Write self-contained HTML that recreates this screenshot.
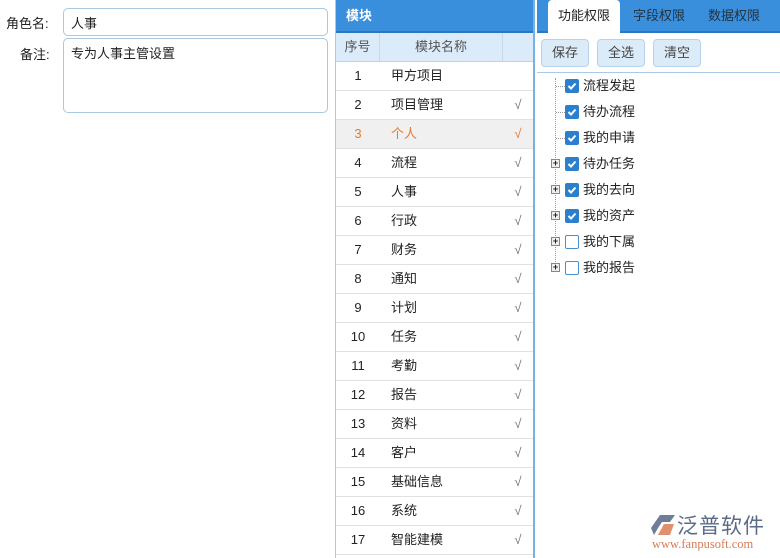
<!DOCTYPE html>
<html><head><meta charset="utf-8"><style>
*{margin:0;padding:0;box-sizing:border-box}
body{width:780px;height:558px;overflow:hidden;background:#fff;font-family:"Liberation Sans","Noto Sans CJK SC",sans-serif;font-size:13px;color:#222;position:relative}
.abs{position:absolute}
.lbl{position:absolute;font-size:13px;color:#222}
.inp{position:absolute;border:1px solid #a9c8e2;border-radius:5px;padding:4px 7px;font-size:13px}
.mid{position:absolute;left:335px;top:0;width:200px;height:558px;border-left:1px solid #a8c9e8;border-right:2px solid #7ab0e0}
.hdr{height:33px;background:#3a8fdc;color:#fff;font-weight:bold;font-size:13px;line-height:31px;padding-left:10px;border-bottom:2px solid #2a78c4}
.ch{height:29px;background:#dcebfa;border-bottom:1px solid #b9d3ec;display:flex;color:#555;line-height:28px}
.row{height:29px;border-bottom:1px solid #e1e1e1;display:flex;line-height:28px}
.c1{width:44px;text-align:center}
.c2{width:123px;padding-left:11px}
.c3{flex:1;text-align:center;color:#777}
.ch .c1,.ch .c2{border-right:1px solid #c4d9ee}
.ch .c2{text-align:center;padding-left:0}
.sel{background:#f0f0f0;color:#e87a2c}
.sel .c3{color:#e87a2c}
.tabs{position:absolute;left:537px;top:0;width:243px;height:33px;background:#3a8fdc;border-bottom:2px solid #2a78c4}
.tab{position:absolute;top:0;height:33px;line-height:31px;color:#234;font-size:13px}
.tab.act{background:#fff;border-radius:4px 4px 0 0;padding:0 10px;color:#222;height:34px}
.btn{position:absolute;top:39px;height:28px;width:48px;background:#dcebf8;border:1px solid #b6d2ec;border-radius:4px;text-align:center;line-height:26px;color:#444}
.tb{position:absolute;left:537px;top:72px;width:243px;border-top:1px solid #a8c9e8}
.it{position:absolute;left:565px;height:16px;line-height:16px}
.cb{position:absolute;left:0;top:0;width:14px;height:14px;border-radius:2px;background:#2a7fcf}
.cb.off{background:#fff;border:1px solid #4a90d0}
.cb svg{position:absolute;left:2px;top:2px}
.it span{position:absolute;left:18px;top:-1px;white-space:nowrap}
.pl{position:absolute;left:551px;width:9px;height:9px;border:1px solid #888;background:#eee;font-size:9px;line-height:7px;text-align:center;font-weight:bold}
</style></head><body>
<div class="lbl" style="left:6px;top:13px">角色名:</div>
<div class="inp" style="left:63px;top:8px;width:265px;height:28px">人事</div>
<div class="lbl" style="left:20px;top:44px">备注:</div>
<div class="inp" style="left:63px;top:38px;width:265px;height:75px">专为人事主管设置</div>

<div class="mid">
<div class="hdr">模块</div>
<div class="ch"><div class="c1">序号</div><div class="c2">模块名称</div><div class="c3"></div></div>
<div class="row"><div class="c1">1</div><div class="c2">甲方项目</div><div class="c3"></div></div>
<div class="row"><div class="c1">2</div><div class="c2">项目管理</div><div class="c3">√</div></div>
<div class="row sel"><div class="c1">3</div><div class="c2">个人</div><div class="c3">√</div></div>
<div class="row"><div class="c1">4</div><div class="c2">流程</div><div class="c3">√</div></div>
<div class="row"><div class="c1">5</div><div class="c2">人事</div><div class="c3">√</div></div>
<div class="row"><div class="c1">6</div><div class="c2">行政</div><div class="c3">√</div></div>
<div class="row"><div class="c1">7</div><div class="c2">财务</div><div class="c3">√</div></div>
<div class="row"><div class="c1">8</div><div class="c2">通知</div><div class="c3">√</div></div>
<div class="row"><div class="c1">9</div><div class="c2">计划</div><div class="c3">√</div></div>
<div class="row"><div class="c1">10</div><div class="c2">任务</div><div class="c3">√</div></div>
<div class="row"><div class="c1">11</div><div class="c2">考勤</div><div class="c3">√</div></div>
<div class="row"><div class="c1">12</div><div class="c2">报告</div><div class="c3">√</div></div>
<div class="row"><div class="c1">13</div><div class="c2">资料</div><div class="c3">√</div></div>
<div class="row"><div class="c1">14</div><div class="c2">客户</div><div class="c3">√</div></div>
<div class="row"><div class="c1">15</div><div class="c2">基础信息</div><div class="c3">√</div></div>
<div class="row"><div class="c1">16</div><div class="c2">系统</div><div class="c3">√</div></div>
<div class="row"><div class="c1">17</div><div class="c2">智能建模</div><div class="c3">√</div></div>
</div>

<div class="tabs">
<div class="tab act" style="left:11px">功能权限</div>
<div class="tab" style="left:96px">字段权限</div>
<div class="tab" style="left:171px">数据权限</div>
</div>
<div class="btn" style="left:541px">保存</div>
<div class="btn" style="left:597px">全选</div>
<div class="btn" style="left:653px">清空</div>
<div class="tb"></div>
<div class="abs" style="left:555px;top:78px;height:192px;border-left:1px dotted #999"></div>

<div class="abs" style="left:556px;top:86px;width:9px;border-top:1px dotted #999"></div>
<div class="abs" style="left:556px;top:112px;width:9px;border-top:1px dotted #999"></div>
<div class="abs" style="left:556px;top:138px;width:9px;border-top:1px dotted #999"></div>

<div class="pl" style="top:159px">+</div>
<div class="pl" style="top:185px">+</div>
<div class="pl" style="top:211px">+</div>
<div class="pl" style="top:237px">+</div>
<div class="pl" style="top:263px">+</div>

<div class="it" style="top:79px"><div class="cb"><svg width="10" height="10"><path d="M1.5 5l2.5 2.5 4.5-5" stroke="#fff" stroke-width="2" fill="none"/></svg></div><span>流程发起</span></div>
<div class="it" style="top:105px"><div class="cb"><svg width="10" height="10"><path d="M1.5 5l2.5 2.5 4.5-5" stroke="#fff" stroke-width="2" fill="none"/></svg></div><span>待办流程</span></div>
<div class="it" style="top:131px"><div class="cb"><svg width="10" height="10"><path d="M1.5 5l2.5 2.5 4.5-5" stroke="#fff" stroke-width="2" fill="none"/></svg></div><span>我的申请</span></div>
<div class="it" style="top:157px"><div class="cb"><svg width="10" height="10"><path d="M1.5 5l2.5 2.5 4.5-5" stroke="#fff" stroke-width="2" fill="none"/></svg></div><span>待办任务</span></div>
<div class="it" style="top:183px"><div class="cb"><svg width="10" height="10"><path d="M1.5 5l2.5 2.5 4.5-5" stroke="#fff" stroke-width="2" fill="none"/></svg></div><span>我的去向</span></div>
<div class="it" style="top:209px"><div class="cb"><svg width="10" height="10"><path d="M1.5 5l2.5 2.5 4.5-5" stroke="#fff" stroke-width="2" fill="none"/></svg></div><span>我的资产</span></div>
<div class="it" style="top:235px"><div class="cb off"></div><span>我的下属</span></div>
<div class="it" style="top:261px"><div class="cb off"></div><span>我的报告</span></div>

<svg class="abs" style="left:650px;top:514px" width="26" height="22"><path d="M10 1 L25 1 L20 8 L12 8 L8 14 L4 21 L1 14 Z" fill="#6f7d96"/><path d="M14 10 L24 10 L20 21 L8 21 Z" fill="#e0906c"/></svg>
<div class="abs" style="left:677px;top:510px;font-size:21px;color:#5b6a86;letter-spacing:1px">泛普软件</div>
<div class="abs" style="left:652px;top:537px;font-size:12.5px;color:#d87c58;font-family:'Liberation Serif',serif">www.fanpusoft.com</div>
</body></html>
